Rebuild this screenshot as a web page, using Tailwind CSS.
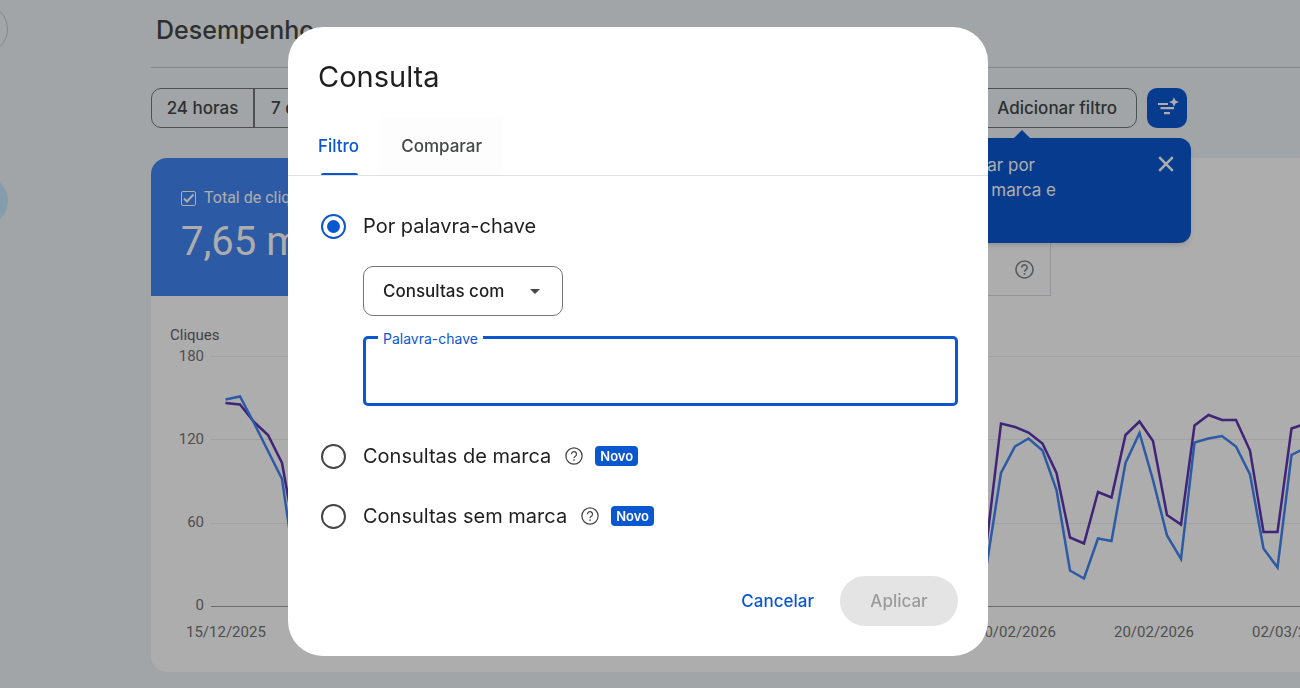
<!DOCTYPE html>
<html lang="pt-BR">
<head>
    <meta charset="UTF-8">
    <meta name="viewport" content="width=device-width, initial-scale=1.0">
    <title>Desempenho</title>
    <script src="https://cdn.jsdelivr.net/npm/@tailwindcss/browser@4"></script>
</head>
<body class="h-screen overflow-hidden bg-[#eef4f8] font-['Inter',sans-serif] text-[#444746]">
    <div class="flex min-h-screen">
        <!-- Collapsed sidebar -->
        <nav class="w-[151px] shrink-0 pt-1 flex flex-col gap-[122px]">
            <button aria-label="Menu" class="-ml-[42px] size-[50px] rounded-full border border-[#c4c7c5]"></button>
            <a href="#" aria-label="Desempenho" class="-ml-[42px] size-[50px] rounded-full bg-[#c2e7ff]"></a>
        </nav>

        <main class="flex-1 min-w-0">
            <header class="h-[68px] border-b border-[#c4c7c5] pl-[5px] flex items-center pb-2">
                <h1 class="text-[25px] font-medium leading-8">Desempenho</h1>
            </header>

            <!-- Filter bar -->
            <div class="relative pt-5 pr-[113px] flex items-center justify-between text-[17px] font-medium whitespace-nowrap">
                <div class="flex h-10 rounded-[10px] border border-[#747775]">
                    <button class="w-[103px] pt-[2px] border-r-2 border-[#747775]">24 horas</button>
                    <button class="px-4 pt-[2px]">7 dias</button>
                </div>
                <div class="flex gap-[10px]">
                    <button class="h-10 rounded-[10px] border border-[#747775] pl-10 pr-[19px] pt-[2px]">Adicionar filtro</button>
                    <button aria-label="Filtro com IA" class="size-10 rounded-[10px] bg-[#0b57d0] text-white flex items-center justify-center">
                        <svg class="size-6" viewBox="0 0 24 24" fill="currentColor">
                            <path d="M3 7h10v2H3zM5.500 11h13.500v2.200H5.500zM9 16h6v2.200H9z"/>
                            <path d="M19 1.200l1.500 3.300 3.300 1.500-3.300 1.500L19 10.800l-1.500-3.300L14.200 6l3.300-1.500z"/>
                        </svg>
                    </button>
                </div>

                <div role="tooltip" class="absolute top-[70px] right-[109px] z-10 w-[400px] h-[105px] rounded-xl bg-[#0b57d0] text-white shadow-md pt-[15px] px-5 font-normal leading-[25px]">
                    <span class="absolute -top-[8px] left-[223px] border-x-8 border-b-8 border-x-transparent border-b-[#0b57d0]"></span>
                    <p class="w-[245px] text-right pr-[21px]">Agora é possível filtrar por</p>
                    <p class="w-[245px] text-right">consultas de marca e</p>
                    <p>sem marca</p>
                    <button aria-label="Fechar" class="absolute top-[18px] right-[17px]">
                        <svg class="size-4" viewBox="0 0 16 16" fill="none" stroke="currentColor" stroke-width="2.500"><path d="M1.200 1.200l13.600 13.600M14.800 1.200l-13.600 13.600"/></svg>
                    </button>
                </div>
            </div>

            <!-- Performance card -->
            <section class="mt-[30px] h-[514px] bg-white rounded-l-2xl overflow-hidden font-['Roboto',sans-serif]">
                <div class="grid grid-cols-4 w-[900px] h-[138px] whitespace-nowrap">
                    <div class="bg-[#4285f4] text-white pl-[30px] pt-7">
                        <label class="flex items-center gap-2 text-base leading-6">
                            <span class="relative size-[15px]">
                                <input type="checkbox" checked class="block appearance-none size-[15px] rounded-[2px] border border-white">
                                <svg class="absolute inset-0 size-[15px]" viewBox="0 0 15 15" fill="none" stroke="white" stroke-width="2"><path d="M3 7.500l3 3 6.500-7"/></svg>
                            </span>
                            Total de cliques
                        </label>
                        <p class="mt-2 text-[40px] leading-12">7,65 mil</p>
                    </div>
                    <div class="bg-[#5e35b1]"></div>
                    <div class="border-r border-b border-[#dadce0]"></div>
                    <div class="border-r border-b border-[#dadce0] flex items-end justify-end pr-4 pb-4">
                        <svg class="size-[19px]" viewBox="0 0 20 20" fill="none" stroke="#80868b" stroke-width="1.700">
                            <circle cx="10" cy="10" r="9"/>
                            <path d="M7.200 8a2.800 2.800 0 1 1 4.400 2.200C10.500 10.900 10 11.300 10 12.300"/>
                            <path d="M10 13.700v1.800"/>
                        </svg>
                    </div>
                </div>

                <div class="pl-[19px] pt-[29px] text-[15px] leading-5 text-[#5f6368]">Cliques</div>
                <div class="flex -mt-px">
                    <div class="w-[60px] pr-[7px] shrink-0 flex flex-col gap-[63px] pt-[2px] text-right text-[15px] leading-5 text-[#757575]">
                        <span>180</span>
                        <span>120</span>
                        <span>60</span>
                        <span>0</span>
                    </div>
                    <svg class="flex-1 min-w-0 h-[270px]" viewBox="211 344 1089 270" preserveAspectRatio="none" fill="none">
                        <path stroke="#eeeeee" d="M211 356.500H1300M211 439.500H1300M211 523.500H1300"/>
                        <path stroke="#9e9e9e" d="M211 606.500H1300"/>
                        <polyline stroke="#5e35b1" stroke-width="2.500" points="225.500,403 240,404.500 254,422 268,435 282,463 295,535 309,540 323,425 337,420 987,540 1001,423.500 1015,427 1028.500,432.500 1042.500,443.500 1056.500,473 1070,537.500 1084,543.500 1098,492 1111.500,497.500 1125.500,435 1139.500,421.500 1153,441 1167,515 1181,524.500 1194.500,425.500 1208.500,415 1222,420 1236,420 1250,450.500 1263.500,532 1277.500,532 1291.500,428.500 1305,424"/>
                        <polyline stroke="#4285f4" stroke-width="2.500" points="225.500,399.500 240,396.500 254,423 268,451 282,479 295,568 309,572 323,450 337,440 987,563 1001,473 1015,446.500 1028.500,438.500 1042.500,450.500 1056.500,490 1070,570.500 1084,578.500 1098,538.500 1111.500,541 1125.500,463 1139.500,433 1153,480 1167,535.500 1181,559 1194.500,442.500 1208.500,438.500 1222,436 1236,446.500 1250,474.500 1263.500,548.500 1277.500,567.500 1291.500,455 1305,448"/>
                    </svg>
                </div>
                <div class="pl-[35px] flex text-[15px] leading-5 text-[#757575] whitespace-nowrap mt-[7px]">
                    <span class="w-[234px] shrink-0">15/12/2025</span>
                    <span class="w-[139px] shrink-0">01/01/2026</span>
                    <span class="w-[139px] shrink-0">11/01/2026</span>
                    <span class="w-[139px] shrink-0">21/01/2026</span>
                    <span class="w-[139px] shrink-0">31/01/2026</span>
                    <span class="w-[138px] shrink-0">10/02/2026</span>
                    <span class="w-[138px] shrink-0">20/02/2026</span>
                    <span class="w-[138px] shrink-0">02/03/2026</span>
                </div>
            </section>
        </main>
    </div>

    <!-- Query filter dialog -->
    <div class="fixed inset-0 z-50 bg-black/32 flex items-center justify-center pr-6 pb-[5px]">
        <div role="dialog" aria-labelledby="dialog-title" class="w-full max-w-[700px] rounded-[35px] bg-white text-[#1f1f1f] overflow-hidden">
            <h2 id="dialog-title" class="px-[30px] pt-[30px] text-[29px] leading-10">Consulta</h2>

            <div class="mt-5 pl-[30px] flex border-b border-[#e0e0e0] text-[17px] font-medium" role="tablist">
                <button role="tab" aria-selected="true" class="relative h-[58px] pt-[2px] mr-[21px] text-[#0b57d0]">
                    Filtro
                    <span class="absolute bottom-0 left-[3px] right-px h-[2px] rounded-t bg-[#0b57d0]"></span>
                </button>
                <button role="tab" aria-selected="false" class="h-[58px] w-[123px] pt-[2px] bg-[#fdfdfd] text-[#444746]">Comparar</button>
            </div>

            <form class="px-[30px] pt-[30px] pb-[30px] text-xl">
                <div class="flex items-center h-10 pl-[3px] gap-[17px]">
                    <input id="keyword" type="radio" name="mode" checked class="appearance-none size-[25px] rounded-full border-2 border-[#0b57d0] grid place-content-center before:size-[13px] before:rounded-full before:bg-[#0b57d0]">
                    <label for="keyword">Por palavra-chave</label>
                </div>

                <div class="ml-[45px] mt-5">
                    <div class="relative w-[200px]">
                        <select aria-label="Condição" class="appearance-none w-full h-[50px] rounded-[10px] border border-[#747775] px-[19px] pt-[2px] text-[17px] font-medium">
                            <option>Consultas com</option>
                        </select>
                        <svg class="absolute right-[23px] top-[23px] w-[10px] h-[5px]" viewBox="0 0 10 5" fill="#444746"><path d="M0 0h10L5 5z"/></svg>
                    </div>
                    <div class="relative mt-5">
                        <label for="term" class="absolute left-[15px] -top-[7px] px-[5px] bg-white text-sm leading-5 text-[#0b57d0]">Palavra-chave</label>
                        <input id="term" type="text" class="block w-full h-[70px] rounded-[5px] border-3 border-[#0b57d0] px-4 outline-none">
                    </div>
                </div>

                <div class="flex items-center h-10 pl-[3px] mt-[30px]">
                    <input id="brand" type="radio" name="mode" class="appearance-none size-[25px] rounded-full border-2 border-[#444746] mr-[17px]">
                    <label for="brand">Consultas de marca</label>
                    <svg class="size-[18px] ml-[14px]" viewBox="0 0 20 20" fill="none" stroke="#444746" stroke-width="1.400">
                        <circle cx="10" cy="10" r="9"/>
                        <path d="M7.200 8a2.800 2.800 0 1 1 4.400 2.200C10.500 10.900 10 11.300 10 12.300"/>
                        <path d="M10 13.700v1.800"/>
                    </svg>
                    <span class="ml-3 rounded-[4px] bg-[#0b57d0] px-[5px] text-white text-[13px] leading-5 font-semibold">Novo</span>
                </div>
                <div class="flex items-center h-10 pl-[3px] mt-5">
                    <input id="nonbrand" type="radio" name="mode" class="appearance-none size-[25px] rounded-full border-2 border-[#444746] mr-[17px]">
                    <label for="nonbrand">Consultas sem marca</label>
                    <svg class="size-[18px] ml-[14px]" viewBox="0 0 20 20" fill="none" stroke="#444746" stroke-width="1.400">
                        <circle cx="10" cy="10" r="9"/>
                        <path d="M7.200 8a2.800 2.800 0 1 1 4.400 2.200C10.500 10.900 10 11.300 10 12.300"/>
                        <path d="M10 13.700v1.800"/>
                    </svg>
                    <span class="ml-3 rounded-[4px] bg-[#0b57d0] px-[5px] text-white text-[13px] leading-5 font-semibold">Novo</span>
                </div>

                <div class="flex justify-end gap-[26px] mt-10 text-[17px] font-medium">
                    <button type="button" class="pt-[2px] text-[#0b57d0]">Cancelar</button>
                    <button type="submit" disabled class="h-[50px] w-[118px] pt-[2px] rounded-full bg-[#e4e4e4] text-[#9b9b9b]">Aplicar</button>
                </div>
            </form>
        </div>
    </div>
</body>
</html>
